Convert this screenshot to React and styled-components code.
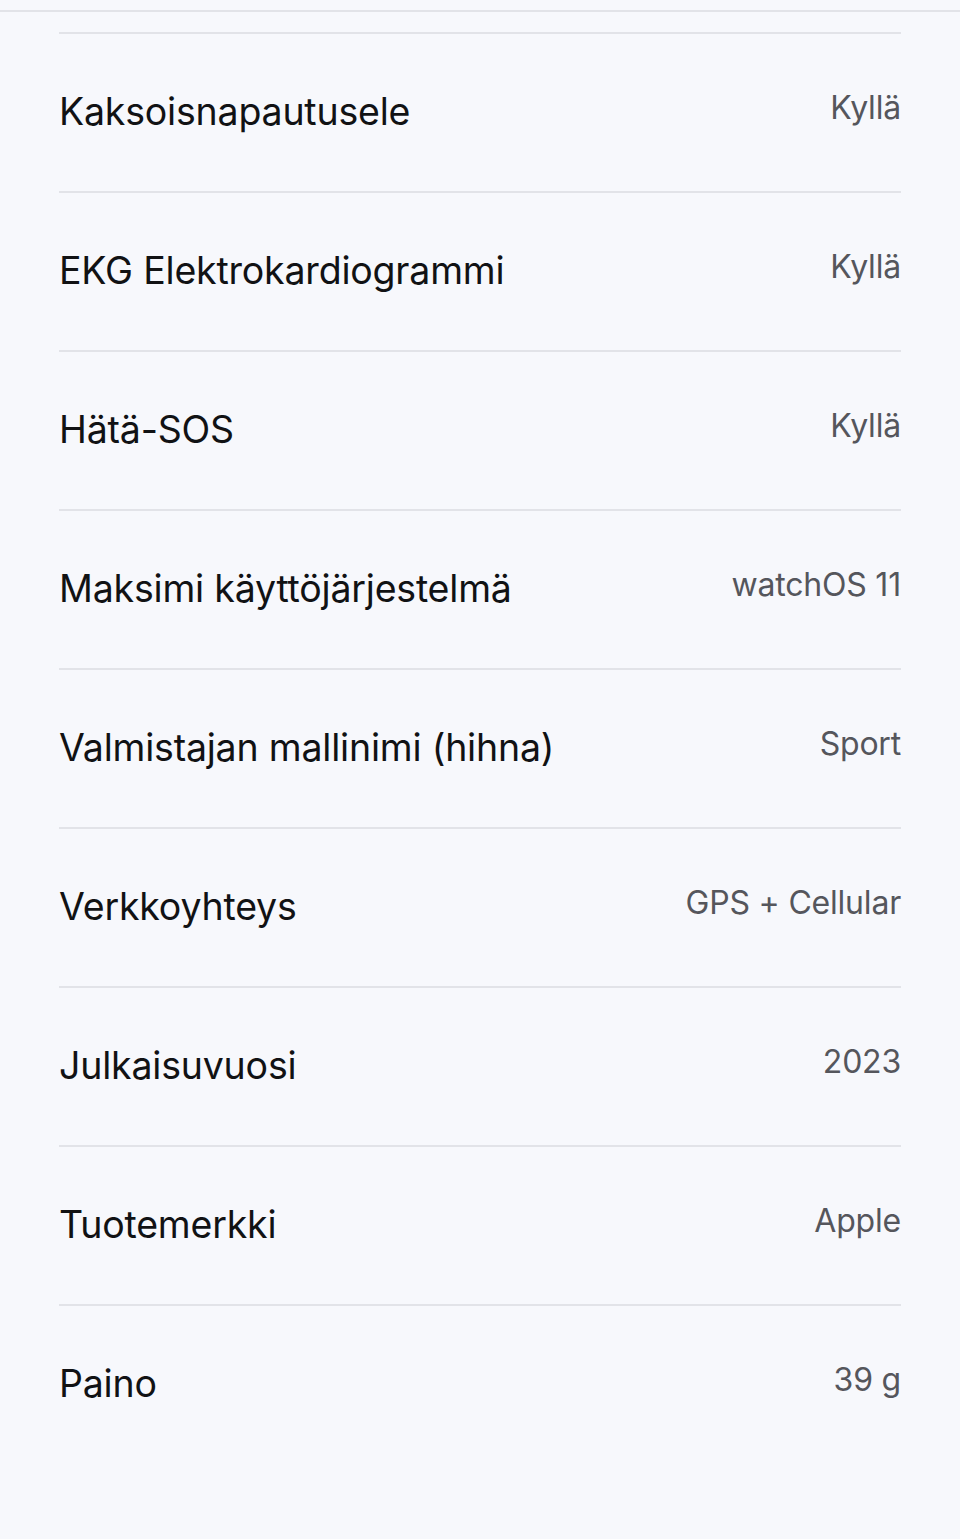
import React from 'react'
import styled, { createGlobalStyle } from 'styled-components'

const GlobalStyle = createGlobalStyle`
  html, body {
    margin: 0;
    padding: 0;
    background: #f7f8fc;
  }
  body {
    font-family: Inter, "Noto Sans", sans-serif;
  }
`

const Page = styled.div`
  box-sizing: border-box;
  min-height: 1539px;
  padding-top: 10px;
  background: #f7f8fc;
`

const TopRule = styled.div`
  height: 2px;
  background: #e2e3e8;
`

const SpecList = styled.div`
  box-sizing: border-box;
  padding: 20px 59px 0;
`

const SpecRow = styled.div`
  box-sizing: border-box;
  display: flex;
  align-items: center;
  justify-content: space-between;
  height: 159px;
  border-top: 2px solid #e2e3e8;
`

const Label = styled.div`
  font-size: 37.5px;
  color: #111214;
  letter-spacing: -0.2px;
  margin-bottom: 2px;
`

const Value = styled.div`
  font-size: 32px;
  color: #55565c;
  margin-bottom: 10px;
  letter-spacing: -0.2px;
`

const specs = [
    ['Kaksoisnapautusele', 'Kyllä'],
    ['EKG Elektrokardiogrammi', 'Kyllä'],
    ['Hätä-SOS', 'Kyllä'],
    ['Maksimi käyttöjärjestelmä', 'watchOS 11'],
    ['Valmistajan mallinimi (hihna)', 'Sport'],
    ['Verkkoyhteys', 'GPS + Cellular'],
    ['Julkaisuvuosi', '2023'],
    ['Tuotemerkki', 'Apple'],
    ['Paino', '39 g'],
]

export default function App() {
    return (
        <Page>
            <GlobalStyle />
            <TopRule />
            <SpecList>
                {specs.map(([label, value]) => (
                    <SpecRow key={label}>
                        <Label>{label}</Label>
                        <Value>{value}</Value>
                    </SpecRow>
                ))}
            </SpecList>
        </Page>
    )
}
